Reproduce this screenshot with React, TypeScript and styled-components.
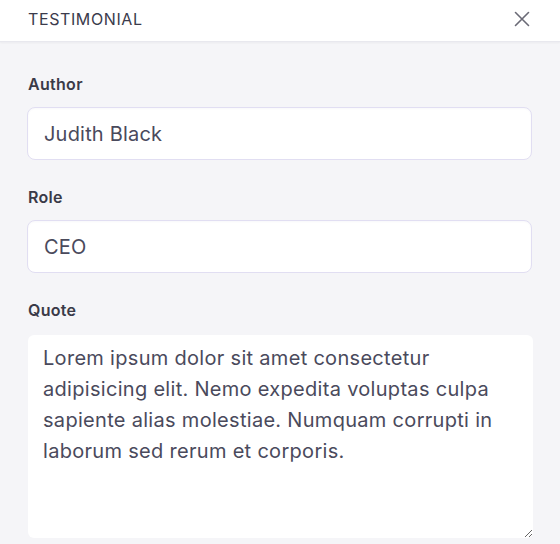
import React from "react";
import styled, { createGlobalStyle } from "styled-components";

const Global = createGlobalStyle`
  html, body { margin: 0; padding: 0; background: #f5f5f8; }
  body { font-family: Inter, "Noto Sans", sans-serif; -webkit-font-smoothing: antialiased; }
  * { box-sizing: border-box; }
`;

const Panel = styled.div`
  width: 560px;
  height: 544px;
  background: #f5f5f8;
  display: flex;
  flex-direction: column;
  overflow: hidden;
`;

const Header = styled.header`
  height: 42px;
  flex: none;
  background: #ffffff;
  border-bottom: 1px solid #e8e8ee;
  box-shadow: 0 1px 2px rgba(30, 30, 60, 0.05);
  display: flex;
  align-items: center;
  justify-content: space-between;
  padding: 0 29px 3px 28px;
`;

const Title = styled.h1`
  margin: 0;
  font-size: 16px;
  font-weight: 400;
  letter-spacing: 0.6px;
  color: #3b3b4c;
  text-transform: uppercase;
`;

const CloseButton = styled.button`
  border: none;
  background: none;
  padding: 0;
  width: 18px;
  height: 18px;
  display: flex;
  align-items: center;
  justify-content: center;
  color: #6a6a76;
  cursor: pointer;
`;

const Body = styled.div`
  flex: 1;
  display: flex;
  flex-direction: column;
  padding: 32px 28px 0 27px;
`;

const Field = styled.div<{ $grow?: boolean }>`
  display: flex;
  flex-direction: column;
  margin-bottom: 27px;
  ${(p) => (p.$grow ? "flex: 1;" : "")}
`;

const Label = styled.label<{ $gap?: number }>`
  font-size: 16px;
  font-weight: 600;
  letter-spacing: 0.3px;
  color: #3a3a48;
  line-height: 20px;
  margin-bottom: ${(p) => p.$gap ?? 13}px;
  padding-left: 1px;
`;

const Input = styled.input`
  width: 505px;
  height: 53px;
  border: 1px solid #e1def2;
  border-radius: 8px;
  background: #ffffff;
  padding: 0 16px;
  font-family: Inter, "Noto Sans", sans-serif;
  font-size: 20px;
  letter-spacing: 0.2px;
  color: #4a4a5c;
  outline: none;
  box-shadow: inset 0 1px 2px rgba(40, 40, 80, 0.03);
`;

const TextArea = styled.textarea`
  width: 505px;
  height: 203px;
  border: none;
  border-radius: 6px;
  background: #ffffff;
  padding: 8px 16px 8px 15px;
  margin-left: 1px;
  font-family: Inter, "Noto Sans", sans-serif;
  font-size: 20px;
  letter-spacing: 0.3px;
  line-height: 31px;
  color: #4a4a5c;
  outline: none;
  resize: vertical;
`;

export default function App() {
  return (
    <>
      <Global />
      <Panel>
        <Header>
          <Title>Testimonial</Title>
          <CloseButton aria-label="Close">
            <svg width="16" height="16" viewBox="0 0 16 16" fill="none" stroke="currentColor" strokeWidth="1.6" strokeLinecap="round">
              <path d="M1.5 1.5 L14.5 14.5 M14.5 1.5 L1.5 14.5" />
            </svg>
          </CloseButton>
        </Header>
        <Body>
          <Field>
            <Label>Author</Label>
            <Input defaultValue="Judith Black" />
          </Field>
          <Field>
            <Label>Role</Label>
            <Input defaultValue="CEO" />
          </Field>
          <Field $grow>
            <Label $gap={15}>Quote</Label>
            <TextArea defaultValue="Lorem ipsum dolor sit amet consectetur adipisicing elit. Nemo expedita voluptas culpa sapiente alias molestiae. Numquam corrupti in laborum sed rerum et corporis." />
          </Field>
        </Body>
      </Panel>
    </>
  );
}
